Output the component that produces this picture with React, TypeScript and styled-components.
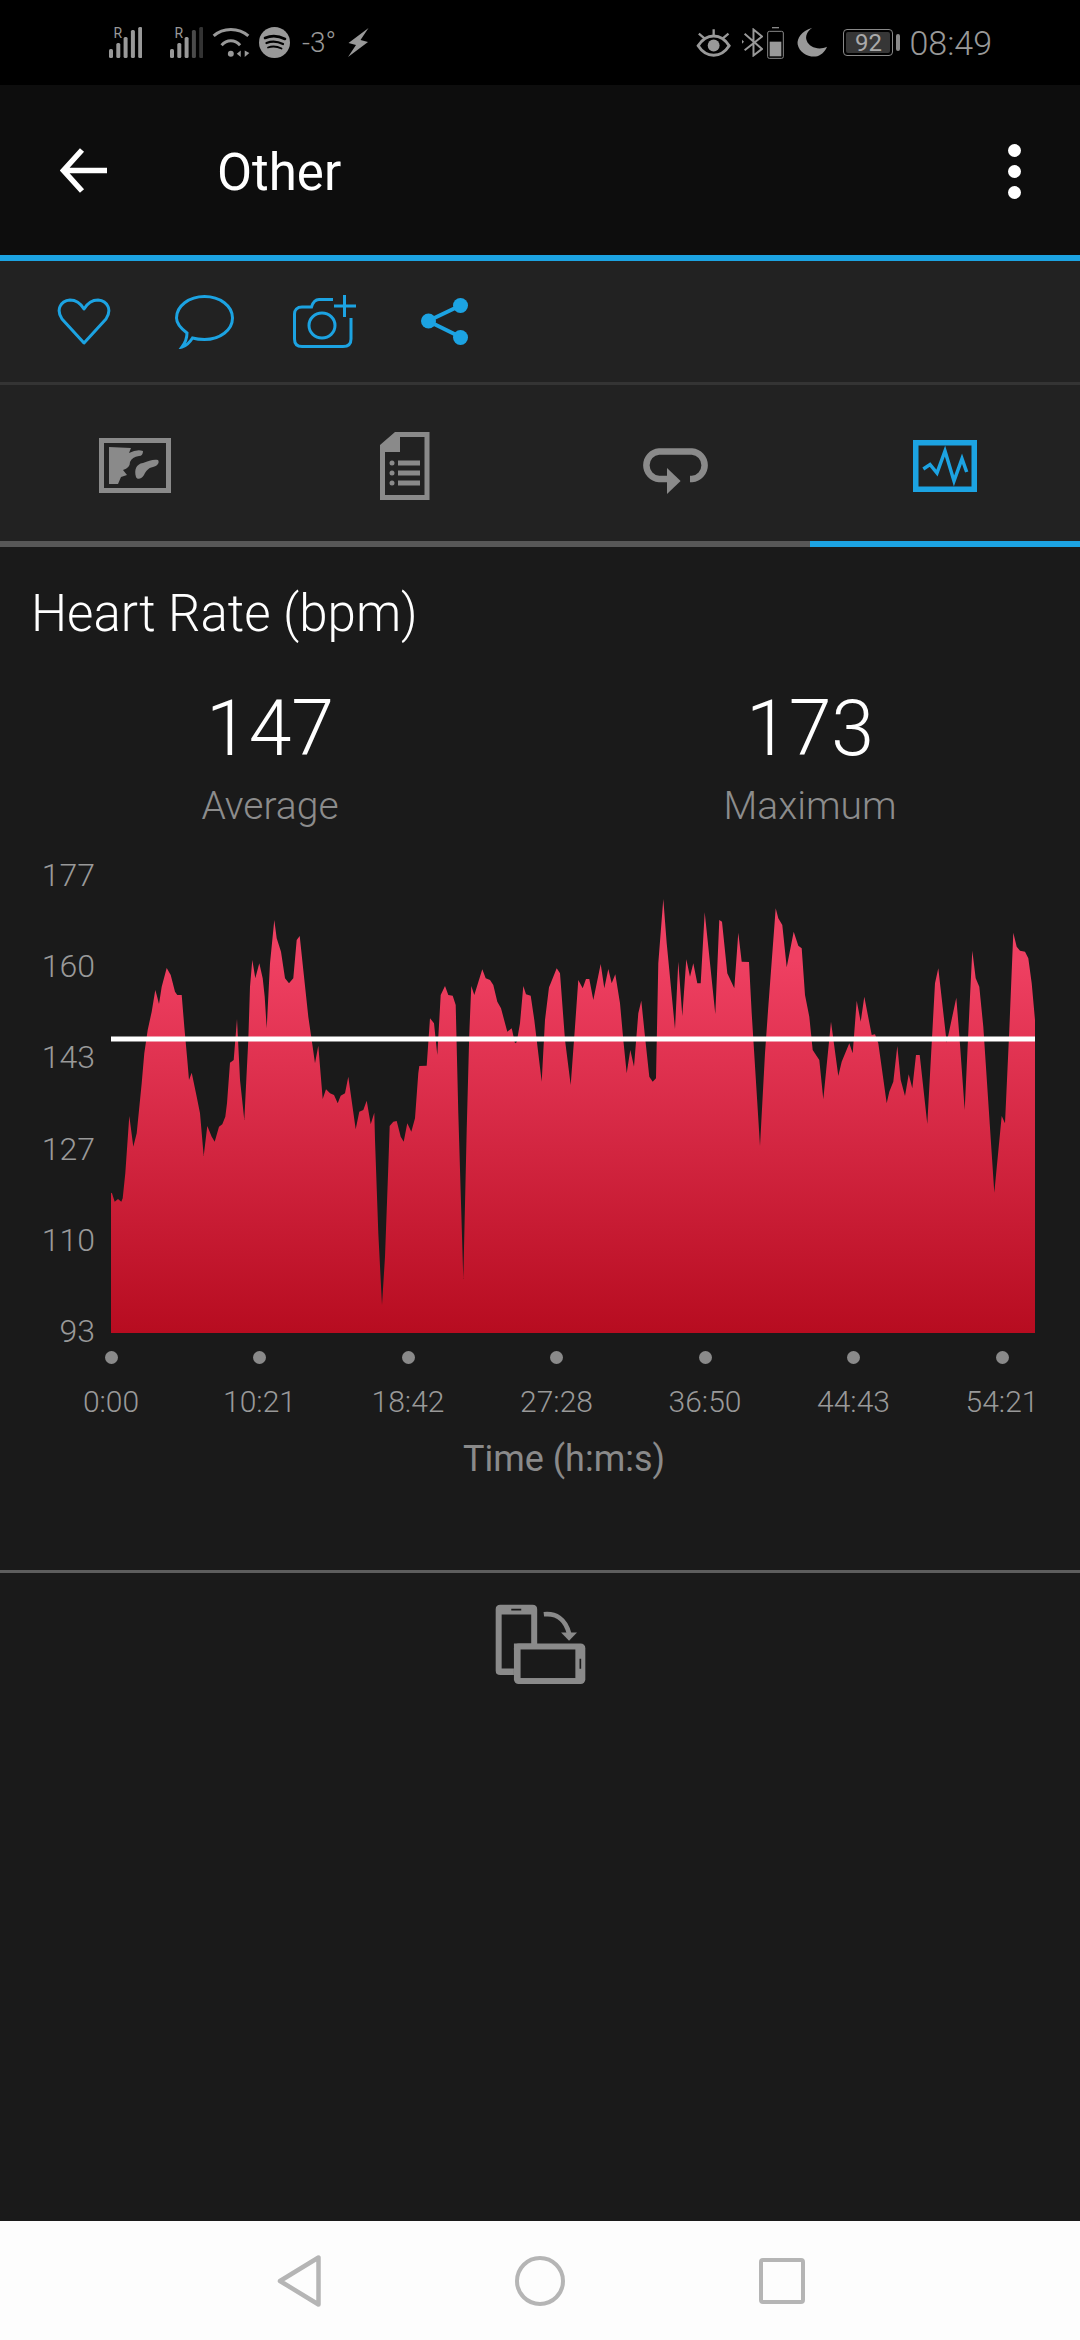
import styled, { createGlobalStyle } from 'styled-components'

const BLUE = '#1ca3e2'
const GREY = '#8a8a8a'
const BG = '#1a1a1a'

// traced from the two halves of the chart, in crop pixels (3x)
const leftTrace = [[33,938],[36,940],[44,965],[54,957],[64,965],[68,955],[76,880],[88,708],[100,800],[110,760],[125,610],[133,520],[143,450],[155,395],[166,330],[170,345],[177,372],[185,320],[200,264],[212,285],[225,335],[232,345],[245,345],[253,440],[262,540],[267,600],[275,578],[290,650],[300,700],[311,828],[322,738],[335,770],[344,785],[357,740],[367,733],[376,710],[381,670],[390,548],[401,540],[411,417],[420,600],[433,720],[445,480],[450,320],[457,240],[466,295],[478,250],[488,295],[494,350],[500,445],[510,250],[523,120],[530,175],[543,215],[555,295],[567,310],[580,295],[590,180],[599,168],[610,270],[625,410],[635,480],[645,550],[655,497],[668,657],[678,628],[690,640],[702,645],[713,670],[722,647],[735,640],[745,590],[767,748],[778,695],[790,690],[800,662],[812,733],[823,698],[825,780],[835,1060],[846,1275],[855,1130],[865,860],[869,738],[880,725],[890,723],[902,770],[911,785],[922,730],[934,755],[945,715],[955,580],[958,558],[980,557],[990,415],[1002,430],[1012,525],[1022,345],[1035,318],[1045,345],[1058,347],[1067,375],[1075,700],[1090,1197],[1100,750],[1108,460],[1114,318],[1123,345],[1147,268],[1157,295],[1170,300],[1180,315],[1192,365],[1203,385],[1222,455],[1235,445],[1245,490],[1250,487],[1260,430],[1270,318],[1278,343],[1292,347],[1303,420],[1325,605],[1335,420],[1347,322]]
const rightTrace = [[0,315],[20,265],[30,280],[45,480],[62,615],[75,440],[85,300],[98,325],[108,297],[118,297],[130,360],[152,252],[163,325],[175,267],[185,310],[196,283],[210,370],[220,480],[230,580],[241,510],[252,560],[265,400],[274,362],[285,470],[298,590],[308,605],[318,595],[325,250],[340,57],[350,190],[375,447],[385,245],[397,408],[409,238],[420,290],[430,250],[442,310],[452,310],[464,97],[496,402],[508,120],[516,125],[532,280],[553,325],[565,158],[575,245],[597,246],[605,400],[630,798],[645,520],[655,380],[677,85],[685,115],[697,135],[710,262],[731,155],[745,197],[755,205],[765,345],[778,410],[788,510],[808,540],[820,658],[843,425],[865,588],[875,545],[898,490],[908,520],[920,362],[932,425],[943,350],[965,465],[975,463],[985,490],[1010,670],[1018,635],[1030,605],[1042,498],[1052,600],[1065,648],[1076,583],[1087,625],[1098,525],[1109,525],[1132,732],[1155,310],[1165,265],[1190,488],[1219,353],[1228,465],[1244,690],[1260,350],[1267,212],[1277,295],[1288,320],[1300,440],[1333,938],[1355,708],[1365,730],[1378,450],[1390,158],[1400,200],[1410,212],[1425,215],[1435,235],[1445,310],[1455,420]]

const tracePoints = [
  ...leftTrace.map(([x, y]) => `${(100 + x / 3).toFixed(1)},${(880 + y / 3).toFixed(1)}`),
  ...rightTrace.map(([x, y]) => `${(550 + x / 3).toFixed(1)},${(880 + y / 3).toFixed(1)}`),
]
const areaPoints = ['111,1333', ...tracePoints, '1035,1333'].join(' ')

const yLabels = ['177', '160', '143', '127', '110', '93']
const xLabels = ['0:00', '10:21', '18:42', '27:28', '36:50', '44:43', '54:21']

function Signal({ dim }: { dim?: boolean }) {
  const bars = [[0, 22], [7.3, 16], [14.6, 10], [21.9, 3], [29.2, 0]]
  return (
    <StatusIcon width="33" height="40" viewBox="0 -4 33 40" $left={dim ? 28 : 0}>
      {bars.map(([x, y], i) => (
        <rect key={x} x={x} y={y} width="4" height={31 - y} rx="1.5" fill={dim && i === 4 ? '#333' : dim && i === 3 ? '#4a4a4a' : '#999'} />
      ))}
      <text x="4.5" y="11" fontSize="14" fontFamily="Roboto, sans-serif" fill="#999">R</text>
    </StatusIcon>
  )
}

export default function App() {
  return (
    <Page>
      <GlobalStyle />
      <StatusBar>
        <StatusGroup>
          <Signal />
          <Signal dim />
          <StatusIcon width="38" height="31" viewBox="335 38 115 92" $left={9}>
            <path d="M340 64 C368 38 416 38 445 64" fill="none" stroke="#999" strokeWidth="9" />
            <path d="M364 92 C380 74 404 74 420 92" fill="none" stroke="#999" strokeWidth="9" />
            <circle cx="392" cy="118" r="9" fill="#999" />
            <path d="M410 118 L422 108 V128 Z M434 108 L448 116 L434 128 Z" fill="#999" />
          </StatusIcon>
          <StatusIcon width="31" height="31" viewBox="0 0 31 31" $left={9}>
            <circle cx="15.5" cy="15.5" r="15.5" fill="#999" />
            <path d="M6 11 C12 8.5 20 9 26 12" fill="none" stroke="#000" strokeWidth="2.6" strokeLinecap="round" />
            <path d="M7.5 16 C12.5 14 19 14.5 24 17" fill="none" stroke="#000" strokeWidth="2.2" strokeLinecap="round" />
            <path d="M9 20.5 C13 19 18.5 19.5 22.5 21.5" fill="none" stroke="#000" strokeWidth="1.8" strokeLinecap="round" />
          </StatusIcon>
          <StatusText>-3°</StatusText>
          <StatusIcon width="21" height="29" viewBox="0 0 21 29" $left={12}>
            <path d="M20.5 0 L0.5 15 L8 17 L0 29 L20 14 L12.5 12 Z" fill="#999" />
          </StatusIcon>
        </StatusGroup>
        <StatusGroup>
          <StatusIcon width="35" height="29" viewBox="20 38 105 88">
            <path d="M26 92 C50 52 96 52 120 92 C96 130 50 130 26 92 Z" fill="none" stroke="#999" strokeWidth="9" />
            <circle cx="73" cy="91" r="18" fill="#999" />
            <path d="M28 55 L46 70 M73 42 V60 M118 55 L100 70" stroke="#999" strokeWidth="7" />
          </StatusIcon>
          <StatusIcon width="21" height="29" viewBox="157 45 64 87" $left={11}>
            <path d="M165 62 L218 108 L192 128 V49 L218 70 L165 112" fill="none" stroke="#999" strokeWidth="6" />
            <path d="M157 80 L163 86 L157 92 Z" fill="#999" />
          </StatusIcon>
          <StatusIcon width="17" height="32" viewBox="232 36 51 96" $left={4}>
            <rect x="234" y="49" width="47" height="81" rx="5" fill="none" stroke="#888" strokeWidth="3" />
            <rect x="247" y="36" width="21" height="4" fill="#888" />
            <rect x="240" y="80" width="35" height="44" fill="#999" />
          </StatusIcon>
          <StatusIcon width="32" height="31" viewBox="315 38 98 94" $left={12}>
            <path d="M365 40 C330 50 318 75 320 90 C325 115 350 130 375 128 C390 126 403 115 410 98 C385 110 355 100 348 80 C342 65 350 50 365 40 Z" fill="#999" />
          </StatusIcon>
          <Battery>
            <BatteryLevel>92</BatteryLevel>
          </Battery>
          <BatteryNub />
          <Clock>08:49</Clock>
        </StatusGroup>
      </StatusBar>

      <Header>
        <BackButton>
          <svg width="48" height="48" viewBox="0 0 48 48">
            <path d="M47 23.5 H5 M22 3 L3.5 23.5 L22 44" fill="none" stroke="#fff" strokeWidth="5.5" />
          </svg>
        </BackButton>
        <Title>Other</Title>
        <Kebab>
          <KebabDot />
          <KebabDot />
          <KebabDot />
        </Kebab>
      </Header>

      <ActionBar>
        <ActionSlot>
          <svg width="54" height="47" viewBox="0 0 54 47">
            <path d="M27 45 L5 21 C-1 12 3 3 13 2 C19 2 24 6 27 11 C30 6 35 2 41 2 C51 3 55 12 49 21 Z" fill="none" stroke={BLUE} strokeWidth="3" strokeLinejoin="round" />
          </svg>
        </ActionSlot>
        <ActionSlot>
          <svg width="59" height="54" viewBox="0 0 59 54">
            <path d="M12 38 C4 32 1.5 27 1.5 23 C1.5 11 14 1.5 29.5 1.5 C45 1.5 57.5 11 57.5 23 C57.5 35 45 44.5 29.5 44.5 C25 44.5 21 44 17.5 43 C15 47 11 51 7 52 C10 48 12 43 12 38 Z" fill="none" stroke={BLUE} strokeWidth="3" />
          </svg>
        </ActionSlot>
        <ActionSlot>
          <svg width="63" height="53" viewBox="0 0 63 53">
            <path d="M40 4.5 H26 C22 4.5 20 7 18.5 12 H9 C4 12 1.5 15 1.5 19 V44 C1.5 49 4 51.5 9 51.5 H50 C55 51.5 58 49 58 44 V23" fill="none" stroke={BLUE} strokeWidth="3" />
            <ellipse cx="29" cy="30.5" rx="13" ry="12.5" fill="none" stroke={BLUE} strokeWidth="3" />
            <path d="M41 11 H63 M51.5 0 V22" stroke={BLUE} strokeWidth="3" />
          </svg>
        </ActionSlot>
        <ActionSlot>
          <svg width="47" height="47" viewBox="0 0 47 47">
            <path d="M7 23 L39.5 7.5 M7 23 L39.5 39" stroke={BLUE} strokeWidth="4" />
            <circle cx="7.5" cy="23" r="7.5" fill={BLUE} />
            <circle cx="39.5" cy="7.5" r="7.5" fill={BLUE} />
            <circle cx="39.5" cy="39.5" r="7.5" fill={BLUE} />
          </svg>
        </ActionSlot>
      </ActionBar>

      <Tabs>
        <Tab>
          <svg width="72" height="55" viewBox="0 0 72 55">
            <rect x="2.5" y="2.5" width="67" height="50" fill="none" stroke={GREY} strokeWidth="5" />
            <path d="M10 9 L32 10 L30 15 Q38 11 44 13 Q44 18 40 18 Q33 19 31 24 Q31 30 24 32 L28 37 L22 39 L19 46 L10 46 Z" fill={GREY} />
            <path d="M37 39 C35 32 37 26 44 25 C50 23 54 21 59 22 C61 25 58 28 54 29 C49 30 47 33 45 37 C43 41 38 42 37 39 Z" fill={GREY} />
          </svg>
        </Tab>
        <Tab>
          <svg width="50" height="68" viewBox="0 0 50 68">
            <path fillRule="evenodd" d="M15 0 H49.5 V68 H0 V13 Z M20 5 H44.5 V63 H5 V20 H20 Z" fill={GREY} />
            <circle cx="12" cy="31" r="2.5" fill={GREY} />
            <circle cx="12" cy="41" r="2.5" fill={GREY} />
            <circle cx="12" cy="51" r="2.5" fill={GREY} />
            <path d="M18 31 H40 M18 41 H40 M18 51 H40" stroke={GREY} strokeWidth="5" />
          </svg>
        </Tab>
        <Tab>
          <LoopIcon width="67" height="46" viewBox="0 0 67 46">
            <path d="M48 31 H50 A13.8 13.8 0 0 0 50 3.5 H17 A13.8 13.8 0 0 0 17 31 H27" fill="none" stroke={GREY} strokeWidth="6.5" />
            <path d="M25 20 L38.6 33 L25 46 Z" fill={GREY} />
          </LoopIcon>
        </Tab>
        <Tab $active>
          <svg width="64" height="52" viewBox="0 0 64 52">
            <rect x="2.75" y="2.75" width="58.5" height="46.5" fill="none" stroke={BLUE} strokeWidth="5.5" />
            <path d="M10.3 29 L17 24.5 L24 33 L32 11 L41 41 L49 18.7 L53.7 32" fill="none" stroke={BLUE} strokeWidth="3.5" />
          </svg>
        </Tab>
      </Tabs>

      <Content>
        <ChartTitle>Heart Rate (bpm)</ChartTitle>
        <Stats>
          <Stat>
            <StatValue>147</StatValue>
            <StatLabel>Average</StatLabel>
          </Stat>
          <Stat>
            <StatValue>173</StatValue>
            <StatLabel>Maximum</StatLabel>
          </Stat>
        </Stats>

        <Chart>
          <YAxis>
            {yLabels.map(label => <YLabel key={label}>{label}</YLabel>)}
          </YAxis>
          <Plot viewBox="111 860 924 473" width="924" height="473">
            <defs>
              <linearGradient id="hr" gradientUnits="userSpaceOnUse" x1="0" y1="960" x2="0" y2="1333">
                <stop offset="0" stopColor="#ef4062" />
                <stop offset="1" stopColor="#b70c20" />
              </linearGradient>
            </defs>
            <polygon points={areaPoints} fill="url(#hr)" />
            <rect x="111" y="1036.5" width="924" height="5" fill="#fff" />
          </Plot>
        </Chart>

        <Ticks>
          {xLabels.map(label => (
            <Tick key={label}>
              <TickDot />
              <TickLabel>{label}</TickLabel>
            </Tick>
          ))}
        </Ticks>
        <AxisTitle>Time (h:m:s)</AxisTitle>

        <Divider />
        <RotateRow>
          <svg width="93" height="83" viewBox="160 125 280 250">
            <path fillRule="evenodd" d="M179 133 H276 Q290 133 290 147 V270 H220 V345 H179 Q165 345 165 331 V147 Q165 133 179 133 Z M183 163 V325 H220 V250 H272 V163 Z" fill={GREY} />
            <rect x="220" y="250" width="215" height="122" rx="14" fill={GREY} />
            <rect x="240" y="268" width="165" height="86" fill={BG} />
            <path d="M212 148 H242 M420 296 V326" stroke={BG} strokeWidth="5" />
            <path d="M310 162 C345 158 375 175 386 220" fill="none" stroke={GREY} strokeWidth="14" />
            <path d="M362 217 H410 L386 242 Z" fill={GREY} />
          </svg>
        </RotateRow>
      </Content>

      <NavBar>
        <svg width="46" height="52" viewBox="0 0 46 52">
          <path d="M5 26 L43.5 2.5 V49.5 Z" fill="none" stroke="#b5b5b5" strokeWidth="4.5" strokeLinejoin="round" />
        </svg>
        <svg width="50" height="50" viewBox="0 0 50 50">
          <circle cx="25" cy="25" r="23" fill="none" stroke="#b5b5b5" strokeWidth="4" />
        </svg>
        <svg width="46" height="46" viewBox="0 0 46 46">
          <rect x="2" y="2" width="42" height="42" rx="2" fill="none" stroke="#b5b5b5" strokeWidth="4" />
        </svg>
      </NavBar>
    </Page>
  )
}

const GlobalStyle = createGlobalStyle`
  html, body {
    margin: 0;
    padding: 0;
    background: ${BG};
  }
  * {
    box-sizing: border-box;
  }
`

const Page = styled.div`
  width: 1080px;
  height: 2340px;
  display: flex;
  flex-direction: column;
  overflow: hidden;
  font-family: Roboto, "Liberation Sans", sans-serif;
`

const StatusBar = styled.div`
  height: 85px;
  flex-shrink: 0;
  background: #000;
  display: flex;
  justify-content: space-between;
  align-items: center;
  padding: 0 88px 0 109px;
`

const StatusGroup = styled.div`
  display: flex;
  align-items: center;
`

const StatusIcon = styled.svg<{ $left?: number }>`
  flex-shrink: 0;
  margin-left: ${p => p.$left ?? 0}px;
`

const StatusText = styled.span`
  margin-left: 12px;
  font-size: 28px;
  font-weight: 300;
  color: #999;
`

const Battery = styled.div`
  margin-left: 15px;
  width: 50px;
  height: 27px;
  padding: 2px;
  border: 1.5px solid #888;
  border-radius: 4px;
  display: flex;
`

const BatteryLevel = styled.div`
  flex: 1;
  background: #363636;
  border-radius: 2px;
  display: flex;
  align-items: center;
  justify-content: center;
  font-size: 24px;
  color: #aaa;
`

const BatteryNub = styled.div`
  margin-left: 3px;
  width: 4px;
  height: 17px;
  border-radius: 2px;
  background: #888;
`

const Clock = styled.span`
  margin-left: 9px;
  font-size: 34px;
  font-weight: 300;
  color: #999;
`

const Header = styled.div`
  height: 170px;
  flex-shrink: 0;
  background: #0d0d0d;
  display: flex;
  align-items: center;
  padding: 2px 59px 0 60px;
`

const BackButton = styled.div`
  width: 157px;
  height: 48px;
`

const Title = styled.div`
  flex: 1;
  padding-top: 3px;
  font-size: 51px;
  color: #fff;
`

const Kebab = styled.div`
  display: flex;
  flex-direction: column;
  gap: 8px;
`

const KebabDot = styled.span`
  width: 13px;
  height: 13px;
  border-radius: 50%;
  background: #fff;
`

const ActionBar = styled.div`
  height: 130px;
  flex-shrink: 0;
  background: #222;
  border-top: 6px solid ${BLUE};
  border-bottom: 3px solid #343434;
  display: flex;
  align-items: center;
  padding-left: 24px;
`

const ActionSlot = styled.div`
  width: 120px;
  display: flex;
  justify-content: center;
`

const Tabs = styled.div`
  height: 162px;
  flex-shrink: 0;
  background: #222;
  display: grid;
  grid-template-columns: repeat(4, 270px);
`

const Tab = styled.div<{ $active?: boolean }>`
  display: flex;
  align-items: center;
  justify-content: center;
  padding-top: 5px;
  border-bottom: 6px solid ${p => (p.$active ? BLUE : '#585858')};
`

const LoopIcon = styled.svg`
  margin-top: 11px;
`

const Content = styled.div`
  flex: 1;
  background: ${BG};
  display: flex;
  flex-direction: column;
`

const ChartTitle = styled.div`
  margin: 38px 0 0 31px;
  font-size: 51px;
  line-height: 58px;
  font-weight: 300;
  color: #fff;
`

const Stats = styled.div`
  margin-top: 43px;
  display: grid;
  grid-template-columns: 540px 540px;
`

const Stat = styled.div`
  display: flex;
  flex-direction: column;
  align-items: center;
`

const StatValue = styled.div`
  font-size: 77px;
  line-height: 86px;
  font-weight: 300;
  color: #fff;
`

const StatLabel = styled.div`
  margin-top: 12px;
  font-size: 39px;
  line-height: 44px;
  font-weight: 300;
  color: #8c8c8c;
`

const Chart = styled.div`
  margin-top: 27px;
  display: grid;
  grid-template-columns: 95px 924px;
  column-gap: 16px;
`

const YAxis = styled.div`
  height: 494px;
  margin-bottom: -2px;
  padding-top: 2px;
  display: flex;
  flex-direction: column;
  justify-content: space-between;
  align-items: flex-end;
`

const YLabel = styled.span`
  font-size: 32px;
  line-height: 36px;
  font-weight: 300;
  color: #999;
`

const Plot = styled.svg`
  display: block;
  margin-top: 5px;
`

const Ticks = styled.div`
  margin-left: 36.75px;
  display: flex;
`

const Tick = styled.div`
  width: 148.5px;
  padding-top: 4px;
  display: flex;
  flex-direction: column;
  align-items: center;
`

const TickDot = styled.span`
  width: 13px;
  height: 13px;
  border-radius: 50%;
  background: ${GREY};
`

const TickLabel = styled.span`
  margin-top: 21px;
  font-size: 30px;
  line-height: 34px;
  font-weight: 300;
  color: #999;
`

const AxisTitle = styled.div`
  margin: 20px 0 0 48px;
  text-align: center;
  font-size: 36px;
  line-height: 40px;
  color: ${GREY};
`

const Divider = styled.div`
  margin-top: 91px;
  height: 3px;
  background: #5e5e5e;
`

const RotateRow = styled.div`
  margin-top: 29px;
  display: flex;
  justify-content: center;
`

const NavBar = styled.div`
  height: 119px;
  flex-shrink: 0;
  background: #fdfdfd;
  display: grid;
  grid-template-columns: repeat(3, 242px);
  justify-content: center;
  justify-items: center;
  align-items: center;
`
